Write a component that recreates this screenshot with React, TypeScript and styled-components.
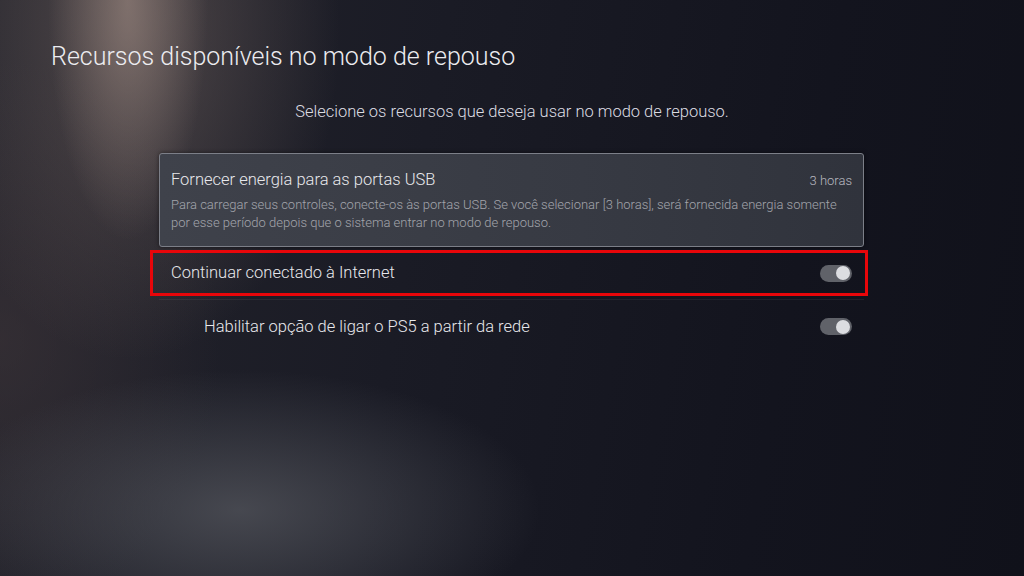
import styled, { createGlobalStyle } from "styled-components"

const Global = createGlobalStyle`
    html, body {
        margin: 0;
        padding: 0;
        background: #12131c;
    }
    * {
        box-sizing: border-box;
    }
`

const Screen = styled.main`
    width: 1024px;
    height: 576px;
    overflow: hidden;
    font-family: Roboto, "Open Sans", sans-serif;
    color: #e6e6ea;
    background:
        radial-gradient(ellipse 80px 240px at 128px 0px, rgba(160, 140, 132, 0.6), rgba(160, 140, 132, 0) 100%),
        radial-gradient(ellipse 210px 330px at 130px 30px, rgba(112, 98, 95, 0.6), rgba(112, 98, 95, 0) 100%),
        radial-gradient(ellipse 300px 140px at 240px 510px, rgba(88, 90, 97, 0.7), rgba(88, 90, 97, 0) 100%),
        radial-gradient(ellipse 220px 280px at 0px 340px, rgba(64, 54, 58, 0.55), rgba(64, 54, 58, 0) 100%),
        linear-gradient(100deg, #24242c 0%, #1a1b25 40%, #13141e 75%, #10111a 100%);
    padding-top: 41px;
`

const Title = styled.h1`
    margin: 0 0 0 51px;
    font-weight: 300;
    font-size: 25px;
    line-height: 32px;
    color: #ececf0;
`

const Subtitle = styled.p`
    margin: 28px 0 0;
    text-align: center;
    font-weight: 300;
    font-size: 16.5px;
    line-height: 22px;
    color: #dcdce2;
`

const List = styled.section`
    width: 705px;
    margin: 30px 0 0 159px;
    display: flex;
    flex-direction: column;
`

const Card = styled.div`
    height: 94px;
    border: 1px solid #7c7f88;
    border-radius: 3px;
    background: linear-gradient(90deg, #3f424b 0%, #373a43 60%, #30333c 100%);
    padding: 15px 11px 0;
    box-shadow: 0 0 4px rgba(0, 0, 0, 0.5);
`

const CardHead = styled.div`
    display: flex;
    justify-content: space-between;
    align-items: baseline;
`

const ItemLabel = styled.span<{ $indent?: boolean }>`
    font-size: 16.5px;
    font-weight: 300;
    line-height: 22px;
    color: #e8e8ec;
    padding-left: ${p => (p.$indent ? "33px" : "0")};
`

const Value = styled.span`
    font-size: 13px;
    font-weight: 300;
    color: #b8b9c0;
`

const Description = styled.p`
    margin: 5px 0 0;
    font-size: 13px;
    font-weight: 300;
    line-height: 18px;
    color: #a3a5ac;
    white-space: nowrap;
`

const Row = styled.div<{ $marked?: boolean; $tall?: boolean }>`
    position: relative;
    height: ${p => (p.$tall ? "54px" : "46px")};
    margin-top: 3px;
    display: flex;
    align-items: center;
    justify-content: space-between;
    padding: 0 12px;

    & + & {
        border-top: 1px solid rgba(255, 255, 255, 0.06);
    }

    ${p =>
        p.$marked &&
        `
        &::after {
            content: "";
            position: absolute;
            left: -9px;
            right: -4px;
            top: 0;
            bottom: 0;
            border: 3px solid #e8060a;
        }
    `}
`

const Toggle = styled.span`
    width: 32px;
    height: 17px;
    border-radius: 9px;
    background: #606269;
    position: relative;

    &::after {
        content: "";
        position: absolute;
        right: 2px;
        top: 1.5px;
        width: 14px;
        height: 14px;
        border-radius: 50%;
        background: #dcdde1;
    }
`

const App = () => {
    return (
        <>
            <Global />
            <Screen>
                <Title>Recursos disponíveis no modo de repouso</Title>
                <Subtitle>Selecione os recursos que deseja usar no modo de repouso.</Subtitle>
                <List>
                    <Card>
                        <CardHead>
                            <ItemLabel>Fornecer energia para as portas USB</ItemLabel>
                            <Value>3 horas</Value>
                        </CardHead>
                        <Description>
                            Para carregar seus controles, conecte-os às portas USB. Se você selecionar [3 horas], será fornecida energia somente
                            <br />
                            por esse período depois que o sistema entrar no modo de repouso.
                        </Description>
                    </Card>
                    <Row $marked>
                        <ItemLabel>Continuar conectado à Internet</ItemLabel>
                        <Toggle />
                    </Row>
                    <Row $tall>
                        <ItemLabel $indent>Habilitar opção de ligar o PS5 a partir da rede</ItemLabel>
                        <Toggle />
                    </Row>
                </List>
            </Screen>
        </>
    )
}

export default App
